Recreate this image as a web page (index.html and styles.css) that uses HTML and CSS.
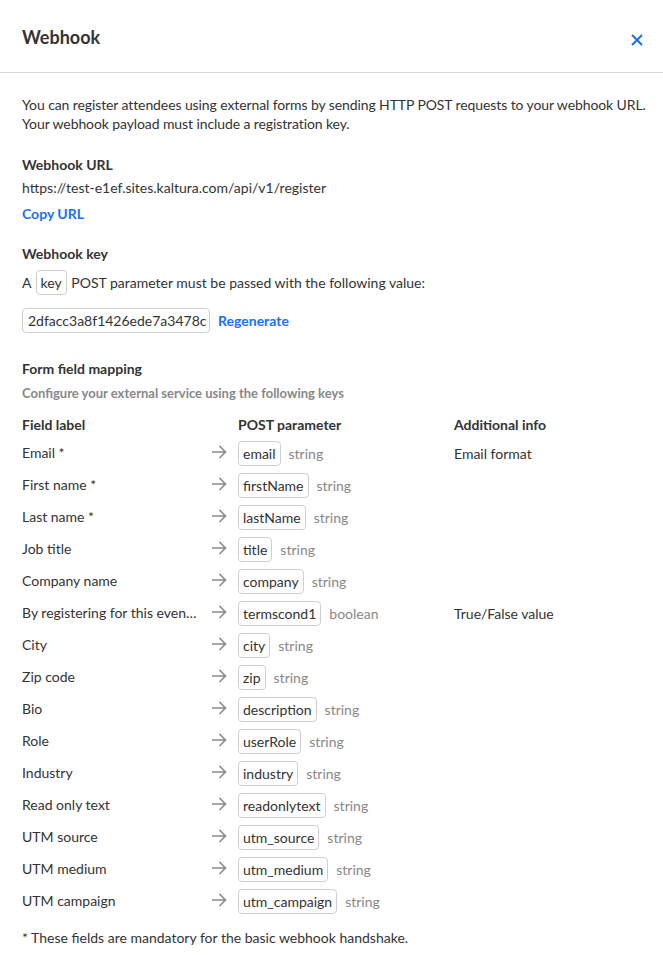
FILE: index.html
```html
<!DOCTYPE html>
<html>
<head>
<meta charset="utf-8">
<link rel="stylesheet" href="styles.css">
</head>
<body>
<div class="modal">
  <header class="modal-header">
    <h1 class="title">Webhook</h1>
    <button class="close" aria-label="Close">
      <svg width="12" height="12" viewBox="0 0 12 12"><path d="M1 1L11 11M11 1L1 11" stroke="#1b6ff5" stroke-width="2" fill="none"/></svg>
    </button>
  </header>
  <div class="modal-body">
    <p class="intro">You can register attendees using external forms by sending HTTP POST requests to your webhook URL. Your webhook payload must include a registration key.</p>

    <section class="section url-section">
      <h2 class="section-title">Webhook URL</h2>
      <div class="line">https://test-e1ef.sites.kaltura.com/api/v1/register</div>
      <a class="link" href="#">Copy URL</a>
    </section>

    <section class="section key-section">
      <h2 class="section-title">Webhook key</h2>
      <div class="line key-line">A <span class="chip">key</span> POST parameter must be passed with the following value:</div>
      <div class="key-row">
        <span class="key-box">2dfacc3a8f1426ede7a3478c</span>
        <a class="link" href="#">Regenerate</a>
      </div>
    </section>

    <section class="section mapping">
      <h2 class="section-title">Form field mapping</h2>
      <div class="subtitle">Configure your external service using the following keys</div>
      <div class="grid">
        <div class="th">Field label</div><div class="th"></div><div class="th">POST parameter</div><div class="th">Additional info</div>
      </div>
      <div class="grid rows" id="rows"></div>
      <div class="footnote">* These fields are mandatory for the basic webhook handshake.</div>
    </section>
  </div>
</div>
<script src="script.js"></script>
</body>
</html>
```
FILE: script.js
```js
const data = [
  ["Email *","email","string","Email format"],
  ["First name *","firstName","string",""],
  ["Last name *","lastName","string",""],
  ["Job title","title","string",""],
  ["Company name","company","string",""],
  ["By registering for this event, I agree to the terms and conditions","termscond1","boolean","True/False value"],
  ["City","city","string",""],
  ["Zip code","zip","string",""],
  ["Bio","description","string",""],
  ["Role","userRole","string",""],
  ["Industry","industry","string",""],
  ["Read only text","readonlytext","string",""],
  ["UTM source","utm_source","string",""],
  ["UTM medium","utm_medium","string",""],
  ["UTM campaign","utm_campaign","string",""]
];
const rows = document.getElementById("rows");
const arrow = '<svg width="16" height="14" viewBox="0 0 16 14"><path d="M1 7H14.5M8.5 1L14.5 7L8.5 13" stroke="#8a8a8a" stroke-width="1.6" fill="none"/></svg>';
for (const [label, param, type, info] of data) {
  rows.insertAdjacentHTML("beforeend",
    `<div class="cell label" title="${label}">${label}</div>` +
    `<div class="cell arrow">${arrow}</div>` +
    `<div class="cell param"><span class="chip">${param}</span><span class="type">${type}</span></div>` +
    `<div class="cell info">${info}</div>`);
}
```
FILE: styles.css
```css
* { box-sizing: border-box; }
html, body { margin: 0; padding: 0; background: #fff; }
body {
  font-family: Lato, "Open Sans", sans-serif;
  font-size: 14px;
  color: #333;
  width: 663px;
}
.modal { width: 663px; }
.modal-header {
  height: 73px;
  display: flex;
  align-items: center;
  justify-content: space-between;
  padding: 0 20px 0 22px;
  border-bottom: 1px solid #d6d6d6;
}
.title {
  margin: 0;
  font-size: 18px;
  font-weight: 700;
  color: #333;
  position: relative;
  top: 1px;
}
.close {
  border: 0;
  background: none;
  padding: 0;
  width: 12px;
  height: 12px;
  display: flex;
  margin-top: 7px;
}
.modal-body { padding: 22px 4px 0 22px; }
.intro { margin: 0; line-height: 19px; letter-spacing: -0.1px; }
.section { margin-top: 22px; }
.key-section { margin-top: 20px; }
.section-title {
  margin: 0;
  font-size: 14px;
  font-weight: 700;
  line-height: 20px;
  height: 20px;
}
.line { line-height: 20px; margin-top: 3px; }
.link {
  display: inline-block;
  color: #1b6ff5;
  font-weight: 700;
  text-decoration: none;
  line-height: 20px;
  margin-top: 6px;
}
.key-line { margin-top: 6px; line-height: 25px; }
.key-line .chip { margin: 0 1px; }
.chip {
  display: inline-block;
  height: 25px;
  line-height: 23px;
  padding: 0 4px;
  border: 1px solid #cfcfcf;
  border-radius: 4px;
  color: #333;
  background: #fff;
}
.key-row {
  display: flex;
  align-items: center;
  gap: 8px;
  margin-top: 13px;
}
.key-box {
  display: inline-block;
  height: 25px;
  line-height: 23px;
  padding: 0 0 0 5px;
  width: 188px;
  overflow: hidden;
  white-space: nowrap;
  border: 1px solid #cfcfcf;
  border-radius: 4px;
  font-size: 14px;
}
.key-row .link { margin-top: 0; }
.mapping { margin-top: 26px; }
.subtitle {
  color: #888;
  font-weight: 700;
  font-size: 13px;
  line-height: 20px;
  margin-top: 4px;
}
.grid {
  display: grid;
  grid-template-columns: 188px 28px 216px 1fr;
}
.th {
  font-weight: 700;
  line-height: 20px;
  margin-top: 12px;
}
.rows { grid-auto-rows: 32px; margin-top: 2px; }
.cell { display: flex; align-items: center; min-width: 0; }
.label {
  display: block;
  line-height: 32px;
  white-space: nowrap;
  overflow: hidden;
  text-overflow: ellipsis;
  padding-right: 12px;
}
.arrow svg { display: block; margin-left: 1px; margin-top: -3px; }
.type { color: #888; margin-left: 8px; }
.footnote { line-height: 20px; margin-top: 11px; }
```
